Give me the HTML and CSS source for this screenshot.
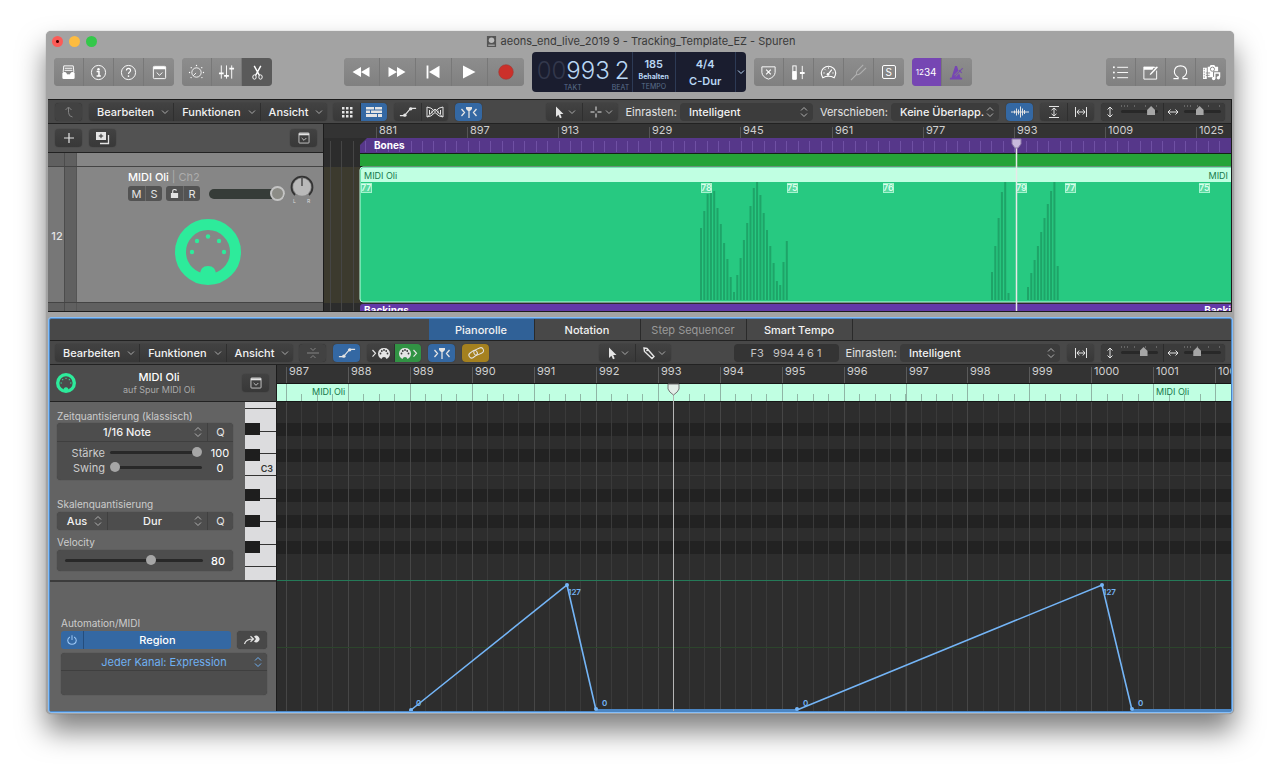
FILE: index.html
```html
<!DOCTYPE html>
<html lang="de">
<head>
  <meta charset="UTF-8">
  <meta name="viewport" content="width=device-width, initial-scale=1.0">
  <title>aeons_end_live_2019 9 - Tracking_Template_EZ - Spuren</title>
  <link rel="stylesheet" href="styles.css">
</head>
<body>
  <!-- Icon sheet -->
  <svg class="sheet" aria-hidden="true">
    <symbol id="i-library" viewBox="0 0 18 18"><path d="M4 2h10l.7 7H12l-1 2.500H7L6 9H3.300z" fill="none" stroke="currentColor"/><path d="M5 4.500h8M4.800 6.700h8.400" stroke="currentColor"/><path d="M2.500 9.500h4l1 2h3l1-2h4v5q0 1.500-1.500 1.500h-10q-1.500 0-1.500-1.500z" fill="currentColor"/></symbol>
    <symbol id="i-info" viewBox="0 0 18 18"><circle cx="9" cy="9" r="7.500" fill="none" stroke="currentColor"/><circle cx="9" cy="5.500" r="1.300" fill="currentColor"/><path d="M7 8h2.500v4.500M7 12.700h4.500" fill="none" stroke="currentColor" stroke-width="1.600"/></symbol>
    <symbol id="i-help" viewBox="0 0 18 18"><circle cx="9" cy="9" r="7.500" fill="none" stroke="currentColor"/><path d="M6.800 7q0-2.300 2.200-2.300T11.200 7Q11.200 8 9.700 9 9 9.600 9 10.700" fill="none" stroke="currentColor" stroke-width="1.200"/><circle cx="9" cy="12.800" r=".9" fill="currentColor"/></symbol>
    <symbol id="i-panel" viewBox="0 0 18 18"><rect x="2.500" y="2.500" width="13" height="13" rx="1" fill="none" stroke="currentColor"/><path d="M2.500 3h13v2.500h-13z" fill="currentColor"/><path d="M6 9l3 3 3-3" fill="none" stroke="currentColor"/></symbol>
    <symbol id="i-dial" viewBox="0 0 20 20"><circle cx="10" cy="10" r="5.500" fill="none" stroke="currentColor"/><path d="M9.500 10.500L6.200 13.800" stroke="currentColor"/><g fill="currentColor"><circle cx="1.800" cy="10" r=".8"/><circle cx="3.800" cy="4.300" r=".8"/><circle cx="10" cy="1.800" r=".8"/><circle cx="16.200" cy="4.300" r=".8"/><circle cx="18.200" cy="10" r=".8"/><circle cx="3.600" cy="16" r=".8"/><circle cx="16.400" cy="16" r=".8"/></g></symbol>
    <symbol id="i-mixer" viewBox="0 0 18 18"><path d="M3.500 1.500v14M9 1.500v14M14.500 1.500v14" stroke="currentColor"/><path d="M1 10h5M6.500 12.500h5M12 5h5" stroke="currentColor" stroke-width="1.800"/></symbol>
    <symbol id="i-scissors" viewBox="0 0 18 18"><path d="M5.500 2L11 12M12.500 2L7 12" stroke="currentColor" stroke-width="1.500"/><ellipse cx="5.800" cy="13.800" rx="1.800" ry="2.300" fill="none" stroke="currentColor"/><ellipse cx="12.200" cy="13.800" rx="1.800" ry="2.300" fill="none" stroke="currentColor"/></symbol>
    <symbol id="i-rewind" viewBox="0 0 18 18"><path d="M9 4v10L.5 9zM17.500 4v10L9 9z" fill="currentColor"/></symbol>
    <symbol id="i-forward" viewBox="0 0 18 18"><path d="M.5 4v10L9 9zM9 4v10l8.500-5z" fill="currentColor"/></symbol>
    <symbol id="i-start" viewBox="0 0 18 18"><path d="M3.500 2.500v13" stroke="currentColor" stroke-width="1.800"/><path d="M15.500 2.800v12.400L5 9z" fill="currentColor"/></symbol>
    <symbol id="i-play" viewBox="0 0 18 18"><path d="M3 2.500l12.500 6.500L3 15.500z" fill="currentColor"/></symbol>
    <symbol id="i-record" viewBox="0 0 18 18"><circle cx="9" cy="9" r="7.300" fill="#cb302a" stroke="#9e3b36" stroke-width=".6"/></symbol>
    <symbol id="i-shield" viewBox="0 0 18 18"><path d="M2 3h14v6q-.5 5-7 7-6.500-2-7-7z" fill="none" stroke="currentColor"/><path d="M6.500 6l5 5M11.500 6l-5 5" stroke="currentColor" stroke-width="1.200"/></symbol>
    <symbol id="i-level" viewBox="0 0 18 18"><rect x="3" y="2" width="3.500" height="14" fill="none" stroke="currentColor"/><path d="M3 8h3.500v8H3zM13 2v14" fill="currentColor" stroke="currentColor"/><path d="M10.500 9.500h5" stroke="currentColor" stroke-width="2"/></symbol>
    <symbol id="i-gauge" viewBox="0 0 18 18"><path d="M3 14.500Q-.5 9 3.500 4.700 9 0 14.500 4.700 18.500 9 15 14.500q-6-3-12 0zM8.500 11l4-5" fill="none" stroke="currentColor" stroke-width="1.200"/><circle cx="8.500" cy="11" r="1.500" fill="currentColor"/><path d="M3.500 9.500h1.500M5 5.500l1 1M9 3.500v1.500M13 9.500h1.500" stroke="currentColor"/></symbol>
    <symbol id="i-fork" viewBox="0 0 18 18"><path d="M1 17l6-6M7 11q-1-2 1-4l6-6M7 11q2 1 4-1l6-6" fill="none" stroke="currentColor" stroke-width="1.200"/></symbol>
    <symbol id="i-metro" viewBox="0 0 18 18"><path d="M7.500 2h2l3.800 12.500H15v2H2v-2h1.700z" fill="currentColor"/><path d="M7.500 12.500L15.500 4.500" stroke="#868686" stroke-width="2.600"/><path d="M7 13l8.500-8.500M11.500 6.500l3 3" stroke="currentColor" stroke-width="1.100"/></symbol>
    <symbol id="i-list" viewBox="0 0 18 18"><path d="M5.500 3.500H17M5.500 9H17M5.500 14.500H17" stroke="currentColor"/><g fill="currentColor"><circle cx="2" cy="3.500" r="1"/><circle cx="2" cy="9" r="1"/><circle cx="2" cy="14.500" r="1"/></g></symbol>
    <symbol id="i-note" viewBox="0 0 18 18"><path d="M2 3.500h12v1M15.500 7v9H2V3" fill="none" stroke="currentColor"/><path d="M2 3h11l-2 3H2z" fill="currentColor"/><path d="M15.800 2.500L9 9.800l-1 2 2-1 6.800-7" fill="currentColor"/></symbol>
    <symbol id="i-loop" viewBox="0 0 18 18"><path d="M1.500 15.500h5V14Q2.500 12 2.500 8 3 2 9 2t6.500 6q0 4-4 6v1.500h5" fill="none" stroke="currentColor" stroke-width="1.100"/></symbol>
    <symbol id="i-media" viewBox="0 0 20 18"><path d="M1 4h4v12H1zM6 3h2l1-2h4l1 2h3v5.500h-5V14H6z" fill="currentColor"/><circle cx="11" cy="5.500" r="2.200" fill="none" stroke="#888"/><path d="M2.300 5v10.500" stroke="#888" stroke-dasharray="1.500 1.200"/><path d="M4 9.500h4.500M4 12h4" stroke="#888"/><path d="M13.500 15V9.500h5V14" fill="none" stroke="#868686" stroke-width="3.600"/><path d="M13.500 15V9.500h5V14" fill="none" stroke="currentColor" stroke-width="1.500"/><circle cx="12.300" cy="15.300" r="1.800" fill="currentColor"/><circle cx="17.300" cy="14.500" r="1.800" fill="currentColor"/></symbol>
    <symbol id="i-doc" viewBox="0 0 12 14"><path d="M1 1h10v12H1z" fill="#555"/><circle cx="6" cy="5.500" r="3" fill="#bbb"/><path d="M2.500 11h7" stroke="#ccc"/></symbol>
    <symbol id="i-up" viewBox="0 0 14 14"><path d="M3.500 5L6.500 2 9.500 5M6.500 2.500v5q0 4 4 4.500" fill="none" stroke="currentColor"/></symbol>
    <symbol id="i-down" viewBox="0 0 8 8"><path d="M1 2.500l3 3 3-3" fill="none" stroke="currentColor"/></symbol>
    <symbol id="i-grid" viewBox="0 0 14 14"><path d="M2 2h2.500v2.500H2zM6 2h2.500v2.500H6zM10 2h2.500v2.500H10zM2 6h2.500v2.500H2zM6 6h2.500v2.500H6zM10 6h2.500v2.500H10zM2 10h2.500v2.500H2zM6 10h2.500v2.500H6zM10 10h2.500v2.500H10z" fill="currentColor"/></symbol>
    <symbol id="i-regions" viewBox="0 0 16 14"><path d="M0 2h8v2.500H0zM9 2h7v2.500H9zM0 5.500h4v2.500H0zM5 5.500h11v2.500H5zM0 9h11v3H0zM12 9h4v3h-4z" fill="currentColor"/></symbol>
    <symbol id="i-auto" viewBox="0 0 20 14"><path d="M1 11h5L13 3h6" fill="none" stroke="currentColor" stroke-width="1.200"/><circle cx="6.500" cy="10.500" r="1.900" fill="currentColor"/><circle cx="13" cy="3.500" r="1.900" fill="currentColor"/></symbol>
    <symbol id="i-flex" viewBox="0 0 18 14"><path d="M1 2q4 0 8 4.500Q13 2 17 2v10q-4 0-8-4.500Q5 12 1 12zM1.500 12L9 4M16.500 12L9 4" fill="none" stroke="currentColor"/><path d="M3.500 5v4M6 5.500v3M12 5.500v3M14.500 5v4" stroke="currentColor"/></symbol>
    <symbol id="i-catch" viewBox="0 0 18 14"><path d="M1.500 4l3 3.500-3 3.500M16.500 4l-3 3.500 3 3.500M9 4v9" fill="none" stroke="currentColor" stroke-width="1.300"/><path d="M6 2h6v2L10 6H8L6 4z" fill="currentColor"/></symbol>
    <symbol id="i-pointer" viewBox="0 0 14 14"><path d="M4 1.500v10.500l2.400-2.200L8 13.300l1.700-.8L8.200 9.100h3.300z" fill="currentColor"/></symbol>
    <symbol id="i-cross" viewBox="0 0 14 14"><path d="M1.500 7h4M8.500 7h4M7 1.500v4M7 8.500v4" stroke="currentColor"/></symbol>
    <symbol id="i-pencil" viewBox="0 0 14 14"><path d="M2 2l3 .5 7 8-2 2-7.500-7zM4.500 5l2-2" fill="none" stroke="currentColor" stroke-width="1.400"/></symbol>
    <symbol id="i-wave" viewBox="0 0 18 14"><path d="M0 7h18M3.500 5.500v3M5.500 3.500v7M7.500 4.500v5M9.500 1.500v11M11.500 3.500v7M13.500 5v4" stroke="currentColor"/></symbol>
    <symbol id="i-vfit" viewBox="0 0 14 14"><path d="M2 1.500h10M2 12.500h10M7 3v8M4.500 5.200L7 3l2.500 2.200M4.500 8.800L7 11l2.500-2.200" fill="none" stroke="currentColor"/></symbol>
    <symbol id="i-hfit" viewBox="0 0 14 14"><path d="M1.500 2v10M12.500 2v10M3 7h8M5.200 4.500L3 7l2.200 2.500M8.800 4.500L11 7l-2.200 2.500" fill="none" stroke="currentColor"/></symbol>
    <symbol id="i-vert" viewBox="0 0 12 12"><path d="M6 1v10M3.500 3.500L6 1l2.500 2.500M3.500 8.500L6 11l2.500-2.500" fill="none" stroke="currentColor"/></symbol>
    <symbol id="i-horz" viewBox="0 0 12 12"><path d="M1 6h10M3.500 3.500L1 6l2.500 2.500M8.500 3.500L11 6 8.500 8.500" fill="none" stroke="currentColor"/></symbol>
    <symbol id="i-plus" viewBox="0 0 14 14"><path d="M2 7h10M7 2v10" stroke="currentColor" stroke-width="1.200"/></symbol>
    <symbol id="i-dup" viewBox="0 0 14 14"><path d="M0 1h10v8H0z" fill="currentColor"/><path d="M5 2.800v4.400M2.800 5h4.400" stroke="#333"/><path d="M12.500 4v8.500H4" fill="none" stroke="currentColor" stroke-width="1.300"/></symbol>
    <symbol id="i-collapse" viewBox="0 0 14 14"><path d="M1 7h12M4.500 2L7 4.500 9.500 2M4.500 12L7 9.500 9.500 12" fill="none" stroke="currentColor"/></symbol>
    <symbol id="i-din" viewBox="0 0 14 14"><path d="M4.500 13Q1 11 1 7.500 1.500 2 7 2t6 5.500Q13 11 9.500 13 9 11 7 11t-2.500 2z" fill="currentColor"/><g fill="#3a3a3a"><circle cx="3.500" cy="7.500" r=".9"/><circle cx="4.800" cy="5" r=".9"/><circle cx="7" cy="4" r=".9"/><circle cx="9.200" cy="5" r=".9"/><circle cx="10.500" cy="7.500" r=".9"/></g></symbol>
    <symbol id="i-gt" viewBox="0 0 6 14"><path d="M1.500 4l3 3.300-3 3.300" fill="none" stroke="currentColor" stroke-width="1.200"/></symbol>
    <symbol id="i-link" viewBox="0 0 18 14"><rect x="1.500" y="5.500" width="9" height="5.500" rx="2.700" transform="rotate(-35 6 8)" fill="none" stroke="currentColor"/><rect x="6.500" y="2.500" width="10" height="5.500" rx="2.700" transform="rotate(-25 12 5)" fill="none" stroke="currentColor"/></symbol>
    <symbol id="i-lock" viewBox="0 0 10 12"><path d="M1 5.500h8V11H1z" fill="currentColor"/><path d="M3 6V3.500Q3 1.500 5 1.500t2 1.500" fill="none" stroke="currentColor" stroke-width="1.200"/></symbol>
    <symbol id="i-power" viewBox="0 0 14 14"><path d="M4.500 3.500Q2 5 2 7.500 2.500 12 7 12t5-4.500q0-2.500-2.500-4M7 1.500V7" fill="none" stroke="currentColor" stroke-width="1.200"/></symbol>
    <symbol id="i-jump" viewBox="0 0 18 14"><path d="M1.500 11Q3 6 10 6M7.500 3.200L10.500 6 7.500 8.800" fill="none" stroke="currentColor" stroke-width="1.200"/><path d="M11 3.500a3.300 3.300 0 1 1 0 5L13 6z" fill="currentColor"/></symbol>
    <symbol id="i-midi" viewBox="0 0 66 66"><circle cx="33" cy="33" r="27.500" fill="none" stroke="currentColor" stroke-width="11"/><path d="M25 56q0-9 8-9t8 9z" fill="currentColor"/><g fill="currentColor"><circle cx="17" cy="33" r="2.200"/><circle cx="22" cy="22" r="2.200"/><circle cx="33" cy="17.500" r="2.200"/><circle cx="44" cy="22" r="2.200"/><circle cx="49" cy="33" r="2.200"/></g></symbol>
  </svg>

  <main class="window">
    <header class="titlebar">
      <div class="lights"><button class="light close" aria-label="Schließen"></button><button class="light min" aria-label="Minimieren"></button><button class="light max" aria-label="Maximieren"></button></div>
      <h1 class="title"><svg class="doc"><use href="#i-doc"/></svg>aeons_end_live_2019 9 - Tracking_Template_EZ - Spuren</h1>
    </header>

    <!-- Control bar -->
    <div class="control-bar">
      <div class="group">
        <button aria-label="Bibliothek"><svg><use href="#i-library"/></svg></button>
        <button aria-label="Informationen"><svg><use href="#i-info"/></svg></button>
        <button aria-label="Hilfe"><svg><use href="#i-help"/></svg></button>
        <button aria-label="Werkzeugleiste"><svg><use href="#i-panel"/></svg></button>
      </div>
      <div class="group">
        <button aria-label="Smart Controls"><svg><use href="#i-dial"/></svg></button>
        <button aria-label="Mixer"><svg><use href="#i-mixer"/></svg></button>
        <button class="active" aria-label="Editoren"><svg><use href="#i-scissors"/></svg></button>
      </div>
      <div class="space-s"></div>
      <div class="group transport">
        <button aria-label="Zurück"><svg><use href="#i-rewind"/></svg></button>
        <button aria-label="Vorwärts"><svg><use href="#i-forward"/></svg></button>
        <button aria-label="Zum Anfang"><svg><use href="#i-start"/></svg></button>
        <button aria-label="Wiedergabe"><svg><use href="#i-play"/></svg></button>
        <button aria-label="Aufnahme"><svg><use href="#i-record"/></svg></button>
      </div>
      <div class="lcd">
        <div class="lcd-pos">
          <div class="digits"><span class="ghost">00</span><span>993</span><span class="beat">2</span></div>
          <div class="units"><span>TAKT</span><span>BEAT</span></div>
        </div>
        <div class="lcd-tempo"><b>185</b><strong>Behalten</strong><small>TEMPO</small></div>
        <div class="lcd-sig"><b>4/4</b><b>C-Dur</b></div>
        <button class="lcd-menu" aria-label="Anzeige"><svg><use href="#i-down"/></svg></button>
      </div>
      <div class="group">
        <button aria-label="Ersetzen"><svg><use href="#i-shield"/></svg></button>
        <button aria-label="Low Latency"><svg><use href="#i-level"/></svg></button>
        <button aria-label="Leistung"><svg><use href="#i-gauge"/></svg></button>
        <button class="dim" aria-label="Stimmgerät"><svg><use href="#i-fork"/></svg></button>
        <button aria-label="Solo"><span class="solo">S</span></button>
      </div>
      <div class="group">
        <button class="count"><small>12</small>34</button>
        <button class="metro" aria-label="Metronom"><svg><use href="#i-metro"/></svg></button>
      </div>
      <div class="space-l"></div>
      <div class="group">
        <button aria-label="Listen"><svg><use href="#i-list"/></svg></button>
        <button aria-label="Notizen"><svg><use href="#i-note"/></svg></button>
        <button aria-label="Loops"><svg><use href="#i-loop"/></svg></button>
        <button aria-label="Medien"><svg class="media"><use href="#i-media"/></svg></button>
      </div>
    </div>

    <!-- Arrange area -->
    <section class="arrange">
      <div class="toolbar">
        <button class="tool off" aria-label="Ebene höher"><svg><use href="#i-up"/></svg></button>
        <div class="tools menus">
          <button>Bearbeiten <svg class="chev"><use href="#i-down"/></svg></button>
          <button>Funktionen <svg class="chev"><use href="#i-down"/></svg></button>
          <button>Ansicht <svg class="chev"><use href="#i-down"/></svg></button>
        </div>
        <div class="tools">
          <button aria-label="Raster"><svg><use href="#i-grid"/></svg></button>
          <button class="blue" aria-label="Spuren"><svg><use href="#i-regions"/></svg></button>
        </div>
        <div class="tools">
          <button aria-label="Automation"><svg><use href="#i-auto"/></svg></button>
          <button aria-label="Flex"><svg><use href="#i-flex"/></svg></button>
        </div>
        <button class="tool blue" aria-label="Catch"><svg><use href="#i-catch"/></svg></button>
        <div class="fill"></div>
        <div class="tools cursors">
          <button aria-label="Zeiger"><svg><use href="#i-pointer"/></svg><svg class="chev"><use href="#i-down"/></svg></button>
          <button aria-label="Fadenkreuz"><svg><use href="#i-cross"/></svg><svg class="chev"><use href="#i-down"/></svg></button>
        </div>
        <label for="snap">Einrasten:</label>
        <select id="snap" class="snap"><option>Intelligent</option></select>
        <label for="drag">Verschieben:</label>
        <select id="drag" class="drag"><option>Keine Überlapp.</option></select>
        <button class="tool blue" aria-label="Wellenform"><svg><use href="#i-wave"/></svg></button>
        <div class="tools">
          <button aria-label="Vertikal einpassen"><svg><use href="#i-vfit"/></svg></button>
          <button aria-label="Horizontal einpassen"><svg><use href="#i-hfit"/></svg></button>
        </div>
        <div class="zooms">
          <label><svg><use href="#i-vert"/></svg><input type="range" class="zoom" value="90" aria-label="Vertikaler Zoom"></label>
          <label><svg><use href="#i-horz"/></svg><input type="range" class="zoom" value="40" aria-label="Horizontaler Zoom"></label>
        </div>
      </div>
      <div class="arrange-body">
        <div class="tracks">
          <div class="track-tools">
            <button class="tool" aria-label="Neue Spur"><svg><use href="#i-plus"/></svg></button>
            <button class="tool" aria-label="Spur duplizieren"><svg><use href="#i-dup"/></svg></button>
            <div class="fill"></div>
            <button class="tool" aria-label="Spurmenü"><svg><use href="#i-panel"/></svg></button>
          </div>
          <div class="track above"><div class="num"></div><div class="stack"></div><div class="head"></div></div>
          <div class="track main">
            <div class="num">12</div>
            <div class="stack"></div>
            <div class="head">
              <div class="strip">
                <div class="strip-left">
                  <div class="name">MIDI Oli <span>| Ch2</span></div>
                  <div class="strip-buttons">
                    <div class="pair"><button>M</button><button>S</button></div>
                    <div class="pair"><button aria-label="Schutz"><svg><use href="#i-lock"/></svg></button><button>R</button></div>
                    <input type="range" class="volume" value="100" aria-label="Lautstärke">
                  </div>
                </div>
                <svg class="pan" viewBox="0 0 24 30"><path d="M5 20A10.500 10.500 0 1 1 19 20" fill="none" stroke="#333" stroke-width="1.800"/><circle cx="12" cy="12" r="8.800" fill="#b9b9b9"/><path d="M12 3v8" stroke="#333" stroke-width="1.200"/><text x="3" y="28">L</text><text x="17" y="28">R</text></svg>
              </div>
              <svg class="track-icon"><use href="#i-midi"/></svg>
            </div>
          </div>
          <div class="track below"><div class="num"></div><div class="stack"></div><div class="head"></div></div>
        </div>
        <svg class="timeline" id="timeline">
          <rect width="100%" height="187" fill="#2c2c2c"/>
          <rect y="43" width="36" height="136" fill="#3c3a2e"/>
          <rect width="100%" height="14" fill="#333"/>
          <path id="ticksLeft" stroke="#454545"/>
          <path d="M36 29V21l7-7H1400v15z" fill="#56378a"/>
          <path id="ticksMarker" stroke="#6f50a4"/>
          <path id="ticksBar" stroke="#555"/>
          <g id="barLabels" class="ruler"></g>
          <text x="50" y="25" class="marker">Bones</text>
          <rect y="29" x="36" width="100%" height="13" fill="#25a338"/>
          <path d="M36 29.500H1400M36 42.500H1400" stroke="#122513"/>
          <rect x="36" y="43" width="1300" height="135" rx="3" fill="#27c981" stroke="#c0ffe2"/>
          <path d="M37 58V46q0-2 2-2H1400v14z" fill="#c0ffe2"/>
          <text x="40" y="55" class="region-name">MIDI Oli</text>
          <text x="100%" dx="-3" y="55" text-anchor="end" class="region-name">MIDI</text>
          <path id="events" stroke="#1ea468" stroke-width="2"/>
          <g id="eventLabels" class="event"></g>
          <path d="M36 187v-4q0-3 3-3H1400v7z" fill="#6339a8"/>
          <text x="40" y="190" class="marker">Backings</text>
          <text x="100%" dx="0" y="190" text-anchor="end" class="marker">Backi</text>
          <path d="M692.500 24v163" stroke="#e8e8e8" stroke-width="1.500"/>
          <path d="M688 15h9v5l-3 4h-3l-3-4z" fill="#c9b9dd" stroke="#8d7aa8"/>
        </svg>
      </div>
    </section>

    <!-- Editor area -->
    <section class="editor">
      <nav class="tabs">
        <button class="on">Pianorolle</button>
        <button>Notation</button>
        <button class="faded">Step Sequencer</button>
        <button>Smart Tempo</button>
      </nav>
      <div class="toolbar">
        <div class="tools menus">
          <button>Bearbeiten <svg class="chev"><use href="#i-down"/></svg></button>
          <button>Funktionen <svg class="chev"><use href="#i-down"/></svg></button>
          <button>Ansicht <svg class="chev"><use href="#i-down"/></svg></button>
        </div>
        <button class="tool off" aria-label="Noten einklappen"><svg><use href="#i-collapse"/></svg></button>
        <button class="tool blue" aria-label="Automation"><svg><use href="#i-auto"/></svg></button>
        <div class="tools">
          <button aria-label="MIDI In"><svg class="gt"><use href="#i-gt"/></svg><svg class="din"><use href="#i-din"/></svg></button>
          <button class="green" aria-label="MIDI Out"><svg class="din"><use href="#i-din"/></svg><svg class="gt"><use href="#i-gt"/></svg></button>
        </div>
        <button class="tool blue" aria-label="Catch"><svg><use href="#i-catch"/></svg></button>
        <button class="tool gold" aria-label="Link"><svg><use href="#i-link"/></svg></button>
        <div class="fill two"></div>
        <div class="tools cursors">
          <button aria-label="Zeiger"><svg><use href="#i-pointer"/></svg><svg class="chev"><use href="#i-down"/></svg></button>
          <button aria-label="Stift"><svg><use href="#i-pencil"/></svg><svg class="chev"><use href="#i-down"/></svg></button>
        </div>
        <div class="fill"></div>
        <output class="position">F3&nbsp;&nbsp; 994 4 6 1</output>
        <label for="snap2">Einrasten:</label>
        <select id="snap2" class="snap wide"><option>Intelligent</option></select>
        <button class="tool" aria-label="Horizontal einpassen"><svg><use href="#i-hfit"/></svg></button>
        <div class="zooms">
          <label><svg><use href="#i-vert"/></svg><input type="range" class="zoom" value="64" aria-label="Vertikaler Zoom"></label>
          <label><svg><use href="#i-horz"/></svg><input type="range" class="zoom" value="32" aria-label="Horizontaler Zoom"></label>
        </div>
      </div>
      <div class="editor-body">
        <aside class="inspector">
          <div class="region-head">
            <svg class="region-icon"><use href="#i-midi"/></svg>
            <div class="region-text"><h2>MIDI Oli</h2><p>auf Spur MIDI Oli</p></div>
            <button class="tool" aria-label="Inspektormenü"><svg><use href="#i-panel"/></svg></button>
          </div>
          <div class="inspector-mid">
            <div class="settings">
              <label class="caption" for="quant">Zeitquantisierung (klassisch)</label>
              <div class="box">
                <div class="box-row first"><select id="quant"><option>1/16 Note</option></select><button>Q</button></div>
                <div class="slide"><label for="strength">Stärke</label><input id="strength" type="range" value="100"><output>100</output></div>
                <div class="slide"><label for="swing">Swing</label><input id="swing" type="range" value="0"><output>0</output></div>
              </div>
              <label class="caption scale" for="scale">Skalenquantisierung</label>
              <div class="box box-row">
                <select class="key" aria-label="Skala ein/aus"><option>Aus</option></select><select id="scale"><option>Dur</option></select><button>Q</button>
              </div>
              <label class="caption velo" for="velocity">Velocity</label>
              <div class="box velocity"><input id="velocity" type="range" max="127" value="80"><output>80</output></div>
            </div>
            <svg class="keys" id="keys"><rect width="31" height="178" fill="#dcdcde"/><path id="whiteLines" stroke="#333"/><g id="blackKeys" fill="#1e1e1e"></g><text x="28" y="70" text-anchor="end">C3</text></svg>
          </div>
          <div class="automation">
            <span class="caption">Automation/MIDI</span>
            <div class="auto-row">
              <div class="auto-main"><button aria-label="Ein/Aus"><svg><use href="#i-power"/></svg></button><button class="mode">Region</button></div>
              <button class="jump" aria-label="Automation bewegen"><svg><use href="#i-jump"/></svg></button>
            </div>
            <div class="box param"><select aria-label="Parameter"><option>Jeder Kanal: Expression</option></select></div>
          </div>
        </aside>
        <svg class="roll" id="roll">
          <rect width="100%" height="346" fill="#2d2d2d"/>
          <g id="rollRows" fill="#222"></g>
          <path d="M0 110.500H1400" stroke="#383838"/>
          <path id="rollBeats" stroke="#3a3a3a"/>
          <path id="rollBars" stroke="#464646"/>
          <rect width="100%" height="18" fill="#333"/>
          <rect y="19" width="100%" height="17" fill="#c0ffe2"/>
          <path id="mintBeats" stroke="#90b8a6"/>
          <path id="mintBars" stroke="#8fb5a5"/>
          <path id="rollTicks" stroke="#5a5a5a"/>
          <path d="M0 18.500H1400M0 36.500H1400" stroke="#161616"/>
          <g id="rollLabels" class="ruler"></g>
          <text x="35" y="30" class="region-name">MIDI Oli</text>
          <text x="879" y="30" class="region-name">MIDI Oli</text>
          <path d="M0 215.500H1400" stroke="#257a58"/>
          <path d="M0 282.500H1400" stroke="#2c452c"/>
          <path d="M320 345H520M855 345H1400" stroke="#4b86c4" stroke-width="2"/>
          <path d="M134 345L290 220L319 345M520 345L825 220L855 345" fill="none" stroke="#74b5f7" stroke-width="1.600"/>
          <g fill="#74b5f7"><circle cx="134" cy="345" r="2"/><circle cx="290" cy="220" r="2"/><circle cx="319" cy="344" r="2"/><circle cx="520" cy="344" r="2"/><circle cx="825" cy="220" r="2"/><circle cx="855" cy="344" r="2"/></g>
          <g class="value"><text x="291" y="230">127</text><text x="139" y="341">0</text><text x="325" y="341">0</text><text x="526" y="341">0</text><text x="826" y="230">127</text><text x="861" y="341">0</text></g>
          <path d="M396.500 29v317" stroke="#b5b5b5"/>
          <path d="M391 19h11v5q-1 3-5.500 6-4.500-3-5.500-6z" fill="#e2eee8" stroke="#777"/>
        </svg>
      </div>
    </section>
  </main>
  <script src="script.js"></script>
</body>
</html>
```
FILE: styles.css
```css
* {
  box-sizing: border-box;
}
body {
  margin: 0;
  padding: 31px 46px 62px;
  background: #fff;
  font-family: Inter, "Liberation Sans", sans-serif;
  font-size: 11px;
  color: #e4e4e4;
  overflow: hidden;
}
button,
select,
input,
output {
  font: inherit;
  color: inherit;
  margin: 0;
}
button {
  display: flex;
  align-items: center;
  justify-content: center;
  padding: 0;
  border: 0;
  background: none;
}
svg {
  display: block;
  flex: none;
}
.sheet {
  position: absolute;
  width: 0;
  height: 0;
}
.fill {
  flex: 1;
}
.fill.two {
  flex: 2;
}

/* window */
.window {
  background: #a3a3a3;
  border-radius: 5px;
  padding: 0 1px 1px 2px;
  box-shadow: 0 0 1px rgba(0, 0, 0, 0.4), 0 17px 28px rgba(0, 0, 0, 0.5);
}
.titlebar {
  display: grid;
  grid-template-columns: 60px 1fr 60px;
  align-items: center;
  height: 20px;
}
.lights {
  display: flex;
  gap: 6px;
  padding-left: 4px;
}
.light {
  width: 11px;
  height: 11px;
  border-radius: 50%;
}
.close {
  background: radial-gradient(circle, #4d0000 1px, #fc5b57 2px);
}
.min {
  background: #fdbc40;
}
.max {
  background: #34c84a;
}
.title {
  display: flex;
  justify-content: center;
  align-items: center;
  gap: 4px;
  margin: 0;
  font-size: 11px;
  font-weight: 400;
  color: #3a3a3a;
}
.doc {
  width: 11px;
  height: 13px;
}

/* control bar */
.control-bar {
  display: flex;
  align-items: center;
  gap: 8px;
  height: 48px;
  padding: 0 7px 6px 6px;
  color: #fff;
}
.space-s {
  flex: 8;
}
.space-l {
  flex: 17;
}
.group {
  display: flex;
  border-radius: 4px;
  overflow: hidden;
  background: #868686;
}
.group button {
  width: 30px;
  height: 28px;
  border-right: 1px solid #787878;
  background: linear-gradient(#8d8d8d, #808080);
}
.group button:last-child {
  border-right: 0;
}
.group svg {
  width: 17px;
  height: 17px;
}
.group .media {
  width: 19px;
}
.group.transport button {
  width: 36px;
}
.transport svg {
  width: 18px;
  height: 18px;
}
.group button.active {
  background: #5a5a5a;
}
.group .dim {
  color: #b0b0b0;
}
.solo {
  width: 14px;
  height: 14px;
  border: 1px solid #fff;
  border-radius: 2px;
  font-size: 10px;
  line-height: 12px;
  text-align: center;
}
.group button.count {
  background: #7646b3;
  font-size: 10px;
}
.count small {
  font-size: 8px;
}
.group .metro {
  color: #7646b3;
}
.lcd {
  display: flex;
  height: 40px;
  border-radius: 4px;
  background: #1a1d2f;
  color: #b9d7f4;
}
.lcd-pos {
  width: 101px;
  padding: 6px 0 0 5px;
  border-right: 1px solid #2d3a55;
}
.digits {
  display: flex;
  font-size: 24px;
  line-height: 26px;
  font-weight: 300;
}
.ghost {
  color: #33384c;
}
.beat {
  margin-left: 5px;
}
.units {
  display: flex;
  gap: 30px;
  padding-left: 27px;
  font-size: 7px;
  line-height: 7px;
  color: #5b6f8c;
}
.lcd-tempo,
.lcd-sig {
  display: flex;
  flex-direction: column;
  align-items: center;
  width: 43px;
  border-right: 1px solid #2d3a55;
}
.lcd b {
  font-size: 11px;
  line-height: 17px;
  font-weight: 600;
}
.lcd-tempo {
  padding-top: 4px;
}
.lcd-tempo strong {
  font-size: 7px;
  line-height: 8px;
}
.lcd-tempo small {
  font-size: 7px;
  line-height: 12px;
  color: #5b6f8c;
}
.lcd-sig {
  width: 60px;
  padding-top: 4px;
}
.lcd-menu {
  width: 10px;
}
.lcd-menu svg {
  width: 8px;
  height: 8px;
}

/* toolbars */
.toolbar {
  display: flex;
  align-items: center;
  gap: 7px;
  height: 24px;
  padding: 0 6px 0 7px;
  background: #484848;
  border-bottom: 1px solid #222;
}
.editor .toolbar {
  padding-left: 5px;
}
.tool,
.tools {
  height: 18px;
  border-radius: 4px;
  background: linear-gradient(#424242, #383838);
  box-shadow: 0 0 1px #2a2a2a;
}
.tool {
  width: 27px;
}
.tools {
  display: flex;
  overflow: hidden;
}
.tools button {
  width: 27px;
}
.tools button + button {
  border-left: 1px solid #2f2f2f;
}
.tool svg,
.tools svg {
  width: 18px;
  height: 14px;
}
.tools .chev {
  width: 8px;
  height: 8px;
  color: #aaa;
}
.off {
  color: #848484;
  background: #424242;
}
.blue {
  background: #3468a3;
}
.green {
  background: #319344;
}
.gold {
  background: #a5811f;
}
.toolbar .tools.menus {
  margin-right: -1px;
}
.menus button {
  width: auto;
  gap: 7px;
  padding: 0 4px 0 8px;
  font-weight: 500;
  color: #f2f2f2;
}
.cursors button {
  width: 36px;
  gap: 2px;
}
.cursors svg {
  width: 14px;
}
.tools .din {
  width: 14px;
}
.tools .gt {
  width: 6px;
}
.toolbar > label {
  margin-right: -4px;
}
select {
  appearance: none;
  border: 0;
  border-radius: 4px;
  outline: 0;
  height: 18px;
  padding: 0 14px 0 9px;
  font-weight: 500;
  color: #f2f2f2;
  background: url("data:image/svg+xml,%3Csvg xmlns='http://www.w3.org/2000/svg' width='8' height='12'%3E%3Cpath d='M1 4.500L4 1.500 7 4.500M1 7.500L4 10.500 7 7.500' fill='none' stroke='%23b0b0b0'/%3E%3C/svg%3E") no-repeat right 5px center #3c3c3c;
}
.snap {
  width: 133px;
}
.drag {
  width: 108px;
}
.snap.wide {
  width: 160px;
}
.position {
  width: 105px;
  height: 18px;
  line-height: 18px;
  border-radius: 4px;
  background: #343434;
  text-align: center;
  color: #c4c4c4;
}
.zooms {
  display: flex;
  height: 18px;
  border-radius: 4px;
  background: #3b3b3b;
  box-shadow: 0 0 1px #2a2a2a;
}
.zooms label {
  display: flex;
  align-items: center;
  gap: 5px;
  width: 62px;
  padding-left: 3px;
}
.zooms label + label {
  border-left: 1px solid #2c2c2c;
}
.zooms svg {
  width: 12px;
  height: 12px;
}

/* sliders */
input[type="range"] {
  appearance: none;
  min-width: 0;
  height: 10px;
  background: none;
}
input[type="range"]::-webkit-slider-runnable-track {
  height: 3px;
  border-radius: 2px;
  background: #282828;
}
input[type="range"]::-webkit-slider-thumb {
  appearance: none;
  width: 10px;
  height: 10px;
  margin-top: -4px;
  border-radius: 50%;
  background: #a6a6a6;
}
input.zoom {
  width: 37px;
  height: 18px;
  background: repeating-linear-gradient(90deg, #666 0 1px, transparent 1px 3px) 0 2px / 8px 2px no-repeat, repeating-linear-gradient(90deg, #666 0 1px, transparent 1px 11px) 13px 2px / 24px 2px no-repeat;
}
input.zoom::-webkit-slider-thumb {
  width: 8px;
  height: 9px;
  margin-top: -4px;
  border-radius: 0;
  clip-path: polygon(50% 0, 100% 45%, 100% 100%, 0 100%, 0 45%);
}

/* arrange */
.arrange {
  border: 1px solid #1c1c1c;
  border-width: 1px 1px 0 0;
  margin-right: 1px;
}
.arrange-body {
  display: grid;
  grid-template-columns: 276px 1fr;
  border-bottom: 1px solid #1c1c1c;
}
.tracks {
  display: flex;
  flex-direction: column;
  border-right: 1px solid #1c1c1c;
}
.track-tools {
  display: flex;
  align-items: center;
  gap: 7px;
  height: 29px;
  padding: 0 6px 0 7px;
  background: #525252;
  border-bottom: 1px solid #222;
}
.track {
  display: grid;
  grid-template-columns: 17px 12px 1fr;
  border-bottom: 1px solid #444;
}
.num {
  display: grid;
  place-items: center;
  background: #777;
  border-right: 1px solid #4c4c4c;
  font-weight: 500;
}
.stack {
  background: #606060;
  border-right: 1px solid #555;
}
.head {
  background: #868686;
}
.above {
  height: 14px;
}
.above .num,
.below .num,
.below .head {
  background: #606060;
}
.main {
  height: 136px;
}
.main .num {
  padding: 2px 0 0 2px;
}
.below {
  flex: 1;
  border-bottom: 0;
}
.main .head {
  display: flex;
  flex-direction: column;
  align-items: center;
  padding-right: 8px;
}
.strip {
  display: flex;
  align-self: stretch;
  gap: 5px;
  padding: 3px 0 0 51px;
}
.name {
  line-height: 14px;
  margin-bottom: 2px;
  font-weight: 500;
  color: #fff;
}
.name span {
  font-weight: 400;
  color: #adadad;
}
.strip-buttons {
  display: flex;
  align-items: center;
  gap: 4px;
}
.pair {
  display: flex;
  border-radius: 3px;
  overflow: hidden;
}
.pair button {
  width: 17px;
  height: 15px;
  background: #535353;
}
.pair button + button {
  border-left: 1px solid #6a6a6a;
}
.pair svg {
  width: 9px;
  height: 11px;
}
input.volume {
  flex: none;
  width: 76px;
  height: 14px;
  margin-left: 5px;
}
input.volume::-webkit-slider-runnable-track {
  height: 10px;
  border-radius: 5px;
  background: #363c38;
}
input.volume::-webkit-slider-thumb {
  width: 15px;
  height: 15px;
  margin-top: -3px;
  border: 2px solid #c4c4c4;
  background: #8c8c86;
}
.pan {
  width: 24px;
  height: 30px;
  margin-top: 5px;
}
.pan text {
  font-size: 5px;
  fill: #ddd;
}
.track-icon {
  width: 66px;
  height: 66px;
  margin: 14px 0 0 24px;
  color: #2deb9b;
}
.timeline {
  width: 100%;
  height: 187px;
}
.ruler {
  font-size: 11px;
  fill: #cfcfcf;
}
.marker {
  font-size: 10px;
  font-weight: 700;
  fill: #fff;
}
.region-name {
  font-size: 9px;
  fill: #177a4c;
}
.event {
  font-size: 9px;
  font-weight: 600;
  fill: #d6ffeb;
}
.event rect {
  fill: #5ad9a0;
  stroke: #a6f3cf;
}

/* editor */
.editor {
  margin: 6px 1px 1px;
  border: 1px solid #4b86c4;
  outline: 1px solid #84bdf8;
  border-radius: 2px;
  background: #484848;
}
.tabs {
  display: flex;
  justify-content: center;
  height: 22px;
  border-bottom: 1px solid #222;
}
.tabs button {
  width: 106px;
  border-right: 1px solid #2a2a2a;
  font-weight: 500;
  color: #f2f2f2;
}
.tabs .on {
  background: #306197;
}
.tabs .faded {
  font-weight: 400;
  color: #9a9a9a;
}
.editor-body {
  display: grid;
  grid-template-columns: 227px 1fr;
}
.inspector {
  display: flex;
  flex-direction: column;
  border-right: 1px solid #1c1c1c;
  background: #636363;
}
.region-head {
  display: flex;
  align-items: center;
  height: 37px;
  padding: 0 7px 0 6px;
  background: #4c4c4c;
  border-bottom: 1px solid #222;
}
.region-icon {
  width: 20px;
  height: 20px;
  color: #2deb9b;
}
.region-text {
  flex: 1;
  text-align: center;
}
.region-text h2,
.region-text p {
  margin: 0;
  font-size: 11px;
  font-weight: 500;
  line-height: 13px;
}
.region-text h2 {
  color: #fff;
}
.region-text p {
  font-size: 9px;
  font-weight: 400;
  line-height: 11px;
  color: #aaa;
}
.inspector-mid {
  display: flex;
  height: 178px;
}
.settings {
  flex: 1;
  min-width: 0;
  padding: 8px 12px 0 7px;
}
.caption {
  display: block;
  font-size: 10px;
  line-height: 13px;
  color: #ccc;
}
.scale {
  margin-top: 18px;
  margin-bottom: 1px;
}
.velo {
  margin-top: 6px;
  margin-bottom: 1px;
}
.box {
  border-radius: 4px;
  background: #4d4d4d;
  box-shadow: 0 0 1px #333;
}
.box-row {
  display: flex;
}
.box-row.first {
  border-bottom: 1px solid #3f3f3f;
  margin-bottom: 3px;
}
.box select {
  flex: 1;
  min-width: 0;
  padding: 0 20px 0 10px;
  text-align-last: center;
  background-color: transparent;
}
.box select.key {
  flex: none;
  width: 51px;
  padding: 0 16px 0 6px;
  border-right: 1px solid #404040;
  border-radius: 0;
}
.box-row button {
  width: 26px;
  border-left: 1px solid #404040;
}
.slide {
  display: grid;
  grid-template-columns: 48px 92px 26px;
  align-items: center;
  column-gap: 5px;
  height: 15px;
}
.slide label {
  text-align: right;
  color: #ccc;
}
.box output {
  text-align: center;
  color: #fff;
}
.box > .slide:last-child {
  margin-bottom: 5px;
}
.box:has(.slide) {
  padding-bottom: 5px;
}
.box > .slide:last-child {
  margin-bottom: 0;
}
.velocity {
  display: flex;
  align-items: center;
  gap: 8px;
  height: 21px;
  padding: 0 8px;
}
.velocity input {
  flex: 1;
}
.velocity output {
  font-weight: 500;
}
.keys {
  width: 31px;
  height: 178px;
}
.keys text {
  font-size: 9px;
  font-weight: 600;
  fill: #333;
}
.automation {
  flex: 1;
  border-top: 2px solid #3c3c3c;
  padding: 35px 9px 0 11px;
}
.auto-row {
  display: flex;
  gap: 6px;
  margin: 1px 0 4px;
  height: 18px;
}
.auto-main {
  display: flex;
  flex: 1;
  border-radius: 3px;
  overflow: hidden;
  background: #3468a3;
}
.auto-main button {
  width: 22px;
  color: #9cc7f5;
}
.auto-main svg {
  width: 12px;
  height: 12px;
}
.auto-main .mode {
  flex: 1;
  border-left: 1px solid #244d7d;
  font-weight: 500;
  color: #fff;
}
.jump {
  width: 30px;
  border-radius: 4px;
  background: #484848;
  box-shadow: 0 0 1px #333;
}
.jump svg {
  width: 18px;
  height: 14px;
}
.param {
  display: flex;
  align-items: flex-start;
  height: 42px;
}
.param select {
  padding: 0 20px;
  border-bottom: 1px solid #3f3f3f;
  border-radius: 0;
  font-weight: 400;
  color: #6fb0f2;
  background-image: url("data:image/svg+xml,%3Csvg xmlns='http://www.w3.org/2000/svg' width='8' height='12'%3E%3Cpath d='M1 4.500L4 1.500 7 4.500M1 7.500L4 10.500 7 7.500' fill='none' stroke='%236fb0f2'/%3E%3C/svg%3E");
}
.roll {
  width: 100%;
  height: 346px;
}
.value {
  font-size: 8px;
  font-weight: 600;
  fill: #74b5f7;
}
```
FILE: script.js
```js
const byId = id => document.getElementById(id);

// evenly spaced vertical lines
function lines(id, start, step, end, y1, y2) {
  let d = "";
  for (let x = start; x < end; x += step) {
    d += "M" + (Math.round(x) + 0.5) + " " + y1 + "V" + y2;
  }
  byId(id).setAttribute("d", d);
}

// numbers are only added while they start inside the ruler
function labels(id, first, inc, start, step, y) {
  const width = byId(id).ownerSVGElement.getBoundingClientRect().width;
  let html = "";
  for (let i = 0; start + i * step < width; i++) {
    html += `<text x="${Math.round(start + i * step)}" y="${y}">${first + i * inc}</text>`;
  }
  byId(id).innerHTML = html;
}

// arrange ruler
lines("ticksLeft", 6, 11.4, 36, 17, 187);
lines("ticksMarker", 41, 11.39, 1400, 17, 28);
lines("ticksBar", 52, 91.1, 1400, 3, 14);
labels("barLabels", 881, 16, 55, 91.1, 10);

// controller events inside the region: start x and the top of each bar
const groups = [
  [377, [104, 87, 70, 58, 67, 84, 100, 119, 135, 153, 168, 151, 134, 116, 99, 82, 64, 58, 71, 89, 106, 122, 139, 157, 161, 138, 117]],
  [668, [148, 122, 94, 68, 58, 169]],
  [704, [163, 149, 136, 122, 108, 94, 80, 67, 58, 142]]
];
let events = "";
groups.forEach(([x, tops]) => {
  tops.forEach((top, i) => {
    events += `M${x + i * 3.3} 176V${top}`;
  });
});
byId("events").setAttribute("d", events);

const notes = [[37, 77], [377, 78], [463, 75], [559, 76], [692, 79], [741, 77], [875, 75]];
byId("eventLabels").innerHTML = notes.map(([x, n]) =>
  `<rect x="${x + 0.5}" y="59.5" width="10" height="9"/><text x="${x}" y="67">${n}</text>`).join("");

// piano roll
const barW = 61.95;
lines("rollBeats", 9, barW / 4, 1400, 37, 346);
lines("rollBars", 9, barW, 1400, 37, 346);
lines("mintBeats", 9, barW / 4, 1400, 29, 36);
lines("mintBars", 9, barW, 1400, 19, 36);
lines("rollTicks", 9, barW, 1400, 2, 18);
labels("rollLabels", 987, 1, 12, barW, 10);

const blacks = [21, 47, 87, 113, 139];
byId("rollRows").innerHTML = blacks.map(y => `<rect y="${y + 37}" width="100%" height="13"/>`).join("");
byId("blackKeys").innerHTML = blacks.map(y => `<rect y="${y}" width="15" height="12"/>`).join("");
byId("whiteLines").setAttribute("d", [6, 29, 51, 73, 96, 119, 142, 164].map(y => `M0 ${y}.5H31`).join(""));
```
